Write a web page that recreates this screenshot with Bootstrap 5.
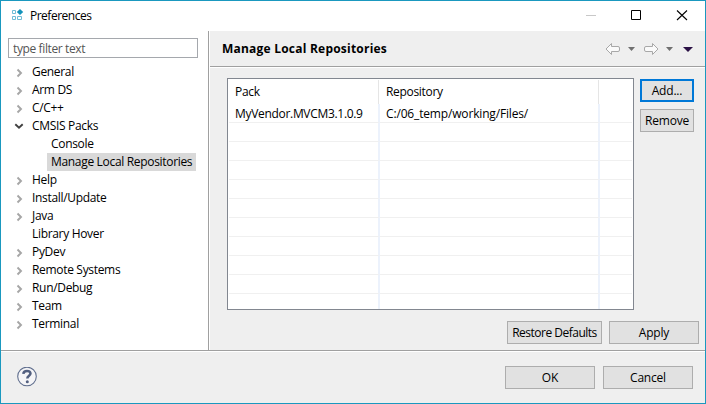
<!DOCTYPE html>
<html lang="en">
<head>
<meta charset="utf-8">
<meta name="viewport" content="width=device-width, initial-scale=1">
<title>Preferences</title>
<link href="https://cdn.jsdelivr.net/npm/bootstrap@5.3.0/dist/css/bootstrap.min.css" rel="stylesheet">
<style>
body{font-family:"Open Sans","Noto Sans",sans-serif;font-size:12px;line-height:18px;letter-spacing:-.32px;color:#000;overflow:hidden}
svg{display:block;flex:none}
.window{width:706px;height:404px;border:1px solid #1a98bf}
.titlebar{height:30px;padding-left:7px}
.titlebar .caption{margin-left:4px;letter-spacing:-.5px}
.side{width:208px;border-right:1px solid #a0a0a0;padding:7px 10px 0 7px}
.main{background:#efefef;border-left:1px solid #fff}
.filter{height:20px;min-height:0;padding:0 0 0 4px;border:1px solid #a5a8ad;border-radius:0;font-size:12px;line-height:18px;letter-spacing:-.38px;color:#555}
.filter::placeholder{color:#555;opacity:1}
.tree{margin-top:5px}
.tree li{height:18px;padding-left:6px}
.tree svg{width:12px;height:18px;margin-right:6px}
.tree .leaf{padding-left:24px}
.tree .child{padding-left:39px}
.tree .child span{padding:0 4px;white-space:nowrap}
.tree .chosen{background:#d9d9d9;width:149px}
.heading{height:36px;border-bottom:1px solid #a0a0a0;box-shadow:0 1px #fff;padding:0 9px 0 12px}
.heading h1{font-size:12px;line-height:18px;letter-spacing:.22px}
.work{padding:11px 11px 0 17px}
.grid-box{width:407px;height:232px;border:1px solid #828790;background:#fff;padding:1px}
.packs{width:403px;table-layout:fixed;border-collapse:separate;border-spacing:0;margin:0}
.packs th,.packs td{font-weight:400;white-space:nowrap}
.packs th{height:24px;padding:0 0 0 6px;background:linear-gradient(#e5e5e5,#e5e5e5) no-repeat right 1px top/1px 100%}
.packs td{height:19px;padding:2px 0 0 6px;border-bottom:1px solid #f0f0f0;border-right:2px solid #ecf2fc;line-height:16px;letter-spacing:-.31px}
.packs td:nth-child(2){letter-spacing:-.16px}
.packs tr>:last-child{border-right:0;background:none}
.packs tr:last-child td{height:15px;border-bottom:0;padding:0}
.push{height:23px;padding:0;border:1px solid #adadad;border-radius:0;background:#e1e1e1;color:#000;font-size:12px;line-height:20px;letter-spacing:-.2px;white-space:nowrap}
.push.tight{letter-spacing:-.5px}
.push.focus{border:2px solid #0078d7;line-height:18px}
.w54{width:54px}.w90{width:90px}.w95{width:95px}
.gap-btn{gap:7px}
.side-actions{padding-top:1px}
.page-actions{margin-top:11px;padding-right:6px}
.footer-bar{height:53px;background:#efefef;border-top:1px solid #a0a0a0;box-shadow:inset 0 1px #fff;padding:0 12px 0 16px}
.footer-bar .push{margin-top:1px}
</style>
<script src="https://cdn.jsdelivr.net/npm/bootstrap@5.3.0/dist/js/bootstrap.bundle.min.js"></script>
</head>
<body>
<svg class="d-none">
<symbol id="shut" viewBox="0 0 12 18"><path d="M3.500 6.500 7 10 3.500 13.500" fill="none" stroke="#a6a6a6" stroke-width="1.9"/></symbol>
<symbol id="open" viewBox="0 0 12 18"><path d="M1.300 7.300 5 10.700 8.700 7.300" fill="none" stroke="#404040" stroke-width="1.9"/></symbol>
</svg>
<div class="window d-flex flex-column bg-white">
  <header class="titlebar d-flex align-items-center">
    <svg width="18" height="16" viewBox="0 0 18 16"><path d="M4.500 2.500h3v3h-3zM4.500 8.500h3v3h-3zM9.500 8.500h4v3h-4z" fill="none" stroke="#6fbdd6"/><path d="M12 1 15.200 4 12 7 8.800 4z" fill="#1292ba"/></svg>
    <span class="caption">Preferences</span>
    <svg class="ms-auto" width="120" height="30" viewBox="585 1 120 30"><path d="M586 15.500h10" stroke="#c8c8c8"/><path d="M631.500 10.500h9v9h-9z" fill="none" stroke="#000"/><path d="M677 10.500 687 20M687 10.500 677 20" stroke="#000" stroke-width="1.100"/></svg>
  </header>
  <div class="d-flex flex-grow-1">
    <aside class="side">
      <input class="form-control filter" type="text" placeholder="type filter text">
      <ul class="tree list-unstyled mb-0">
        <li class="d-flex"><svg><use href="#shut"/></svg>General</li>
        <li class="d-flex"><svg><use href="#shut"/></svg>Arm DS</li>
        <li class="d-flex"><svg><use href="#shut"/></svg>C/C++</li>
        <li class="d-flex"><svg><use href="#open"/></svg>CMSIS Packs</li>
        <li class="d-flex child"><span>Console</span></li>
        <li class="d-flex child"><span class="chosen">Manage Local Repositories</span></li>
        <li class="d-flex"><svg><use href="#shut"/></svg>Help</li>
        <li class="d-flex"><svg><use href="#shut"/></svg>Install/Update</li>
        <li class="d-flex"><svg><use href="#shut"/></svg>Java</li>
        <li class="d-flex leaf">Library Hover</li>
        <li class="d-flex"><svg><use href="#shut"/></svg>PyDev</li>
        <li class="d-flex"><svg><use href="#shut"/></svg>Remote Systems</li>
        <li class="d-flex"><svg><use href="#shut"/></svg>Run/Debug</li>
        <li class="d-flex"><svg><use href="#shut"/></svg>Team</li>
        <li class="d-flex"><svg><use href="#shut"/></svg>Terminal</li>
      </ul>
    </aside>
    <main class="main flex-grow-1">
      <div class="heading d-flex align-items-center justify-content-between">
        <h1 class="fw-bold mb-0">Manage Local Repositories</h1>
        <svg width="96" height="35" viewBox="600 31 96 35">
          <g fill="#fafafa" stroke="#a8a8a8" stroke-linejoin="round"><path d="M606 49 611.500 43.500V46.500H618Q619.500 46.500 619.500 48V50Q619.500 51.500 618 51.500H611.500V54.500z"/><path d="M658 49 652.500 43.500V46.500H646Q644.500 46.500 644.500 48V50Q644.500 51.500 646 51.500H652.500V54.500z"/></g>
          <path d="M628 47h7l-3.500 4zM666 47h7l-3.500 4z" fill="#707070"/><path d="M683 47h10l-5 5z" fill="#2a1145"/>
        </svg>
      </div>
      <div class="work">
        <div class="d-flex justify-content-between">
          <div class="grid-box">
            <table class="packs">
              <colgroup><col style="width:151px"><col style="width:220px"><col></colgroup>
              <thead><tr><th>Pack</th><th>Repository</th><th></th></tr></thead>
              <tbody>
                <tr><td>MyVendor.MVCM3.1.0.9</td><td>C:/06_temp/working/Files/</td><td></td></tr>
                <tr><td></td><td></td><td></td></tr><tr><td></td><td></td><td></td></tr><tr><td></td><td></td><td></td></tr>
                <tr><td></td><td></td><td></td></tr><tr><td></td><td></td><td></td></tr><tr><td></td><td></td><td></td></tr>
                <tr><td></td><td></td><td></td></tr><tr><td></td><td></td><td></td></tr><tr><td></td><td></td><td></td></tr>
                <tr><td></td><td></td><td></td></tr>
              </tbody>
            </table>
          </div>
          <div class="side-actions d-flex flex-column gap-btn">
            <button class="btn push focus w54">Add...</button>
            <button class="btn push w54">Remove</button>
          </div>
        </div>
      </div>
      <div class="page-actions d-flex justify-content-end gap-btn">
        <button class="btn push tight w95">Restore Defaults</button>
        <button class="btn push w90">Apply</button>
      </div>
    </main>
  </div>
  <footer class="footer-bar d-flex align-items-center">
    <svg class="me-auto" width="20" height="20" viewBox="0 0 20 20"><circle cx="10" cy="9.500" r="9.300" fill="#f5f5f7" stroke="#62708f" stroke-width="1.100"/><path d="M6.300 6.800Q6.600 4 10 4T13.500 6.600C13.500 8.800 10.300 8.800 10.300 11.500" fill="none" stroke="#536080" stroke-width="2.500"/><circle cx="10.300" cy="14.700" r="1.500" fill="#536080"/></svg>
    <div class="d-flex gap-2">
      <button class="btn push w90">OK</button>
      <button class="btn push w90">Cancel</button>
    </div>
  </footer>
</div>
</body>
</html>
